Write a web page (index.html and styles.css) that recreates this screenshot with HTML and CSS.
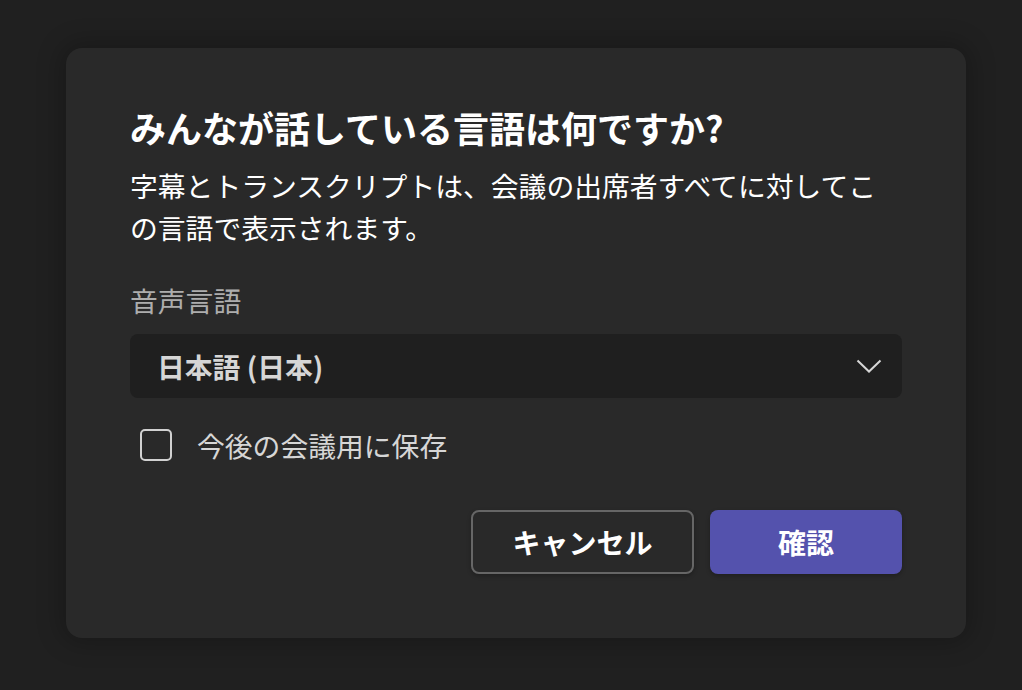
FILE: index.html
```html
<!DOCTYPE html>
<html lang="ja">
<head>
<meta charset="utf-8">
<link rel="stylesheet" href="styles.css">
</head>
<body>
<div class="backdrop">
  <div class="dialog">
    <h1 class="title">みんなが話している言語は何ですか?</h1>
    <p class="desc">字幕とトランスクリプトは、会議の出席者すべてに対してこの言語で表示されます。</p>
    <div class="label">音声言語</div>
    <div class="select">
      <span class="select-value">日本語 (日本)</span>
      <svg class="chevron" width="26" height="14" viewBox="0 0 26 14"><path d="M1.5 1.5 L13 12.5 L24.5 1.5" fill="none" stroke="#d6d6d6" stroke-width="2"/></svg>
    </div>
    <label class="check-row">
      <span class="checkbox"></span>
      <span class="check-label">今後の会議用に保存</span>
    </label>
    <div class="actions">
      <button class="btn btn-secondary">キャンセル</button>
      <button class="btn btn-primary">確認</button>
    </div>
  </div>
</div>
</body>
</html>
```
FILE: styles.css
```css
html, body {
  margin: 0;
  padding: 0;
  height: 100%;
}
body {
  background: #1f1f1f;
  font-family: "Noto Sans CJK JP", "Noto Sans", sans-serif;
  color: #ffffff;
}
.backdrop {
  height: 690px;
  padding-top: 48px;
  padding-left: 66px;
  box-sizing: border-box;
  background: #202020;
}
.dialog {
  width: 900px;
  height: 590px;
  box-sizing: border-box;
  background: #292929;
  border-radius: 16px;
  padding: 0 64px;
  box-shadow: 0 0 24px 6px rgba(0, 0, 0, 0.22);
  display: flex;
  flex-direction: column;
}
.title {
  margin: 0;
  margin-top: 55px;
  font-size: 36px;
  font-weight: 700;
  line-height: 48px;
  color: #ffffff;
}
.desc {
  margin: 13px 0 0;
  font-size: 27.8px;
  line-height: 42px;
  font-weight: 400;
  color: #ffffff;
}
.label {
  margin-top: 32px;
  font-size: 27.8px;
  line-height: 40px;
  color: #adadad;
}
.select {
  margin-top: 14px;
  height: 64px;
  border-radius: 8px;
  background: #1f1f1f;
  display: flex;
  align-items: center;
  justify-content: space-between;
  padding: 0 20px 0 27px;
}
.select-value {
  font-size: 27.8px;
  font-weight: 700;
  color: #d6d6d6;
}
.chevron {
  display: block;
}
.check-row {
  margin-top: 27px;
  display: flex;
  align-items: center;
  padding-left: 10px;
  gap: 25px;
}
.checkbox {
  width: 32px;
  height: 32px;
  box-sizing: border-box;
  border: 2px solid #d1d1d1;
  border-radius: 5px;
}
.check-label {
  font-size: 27.8px;
  line-height: 40px;
  color: #d6d6d6;
}
.actions {
  margin-top: 45px;
  display: flex;
  justify-content: flex-end;
  gap: 16px;
}
.btn {
  height: 64px;
  border-radius: 8px;
  font-family: "Noto Sans CJK JP", "Noto Sans", sans-serif;
  font-size: 28px;
  font-weight: 700;
  color: #ffffff;
  cursor: pointer;
  box-sizing: border-box;
}
.btn-secondary {
  width: 223px;
  background: #292929;
  border: 2px solid #666666;
  box-shadow: 0 2px 4px rgba(0, 0, 0, 0.25);
}
.btn-primary {
  width: 192px;
  background: #5452ad;
  border: none;
  box-shadow: 0 2px 4px rgba(0, 0, 0, 0.25);
}
```
